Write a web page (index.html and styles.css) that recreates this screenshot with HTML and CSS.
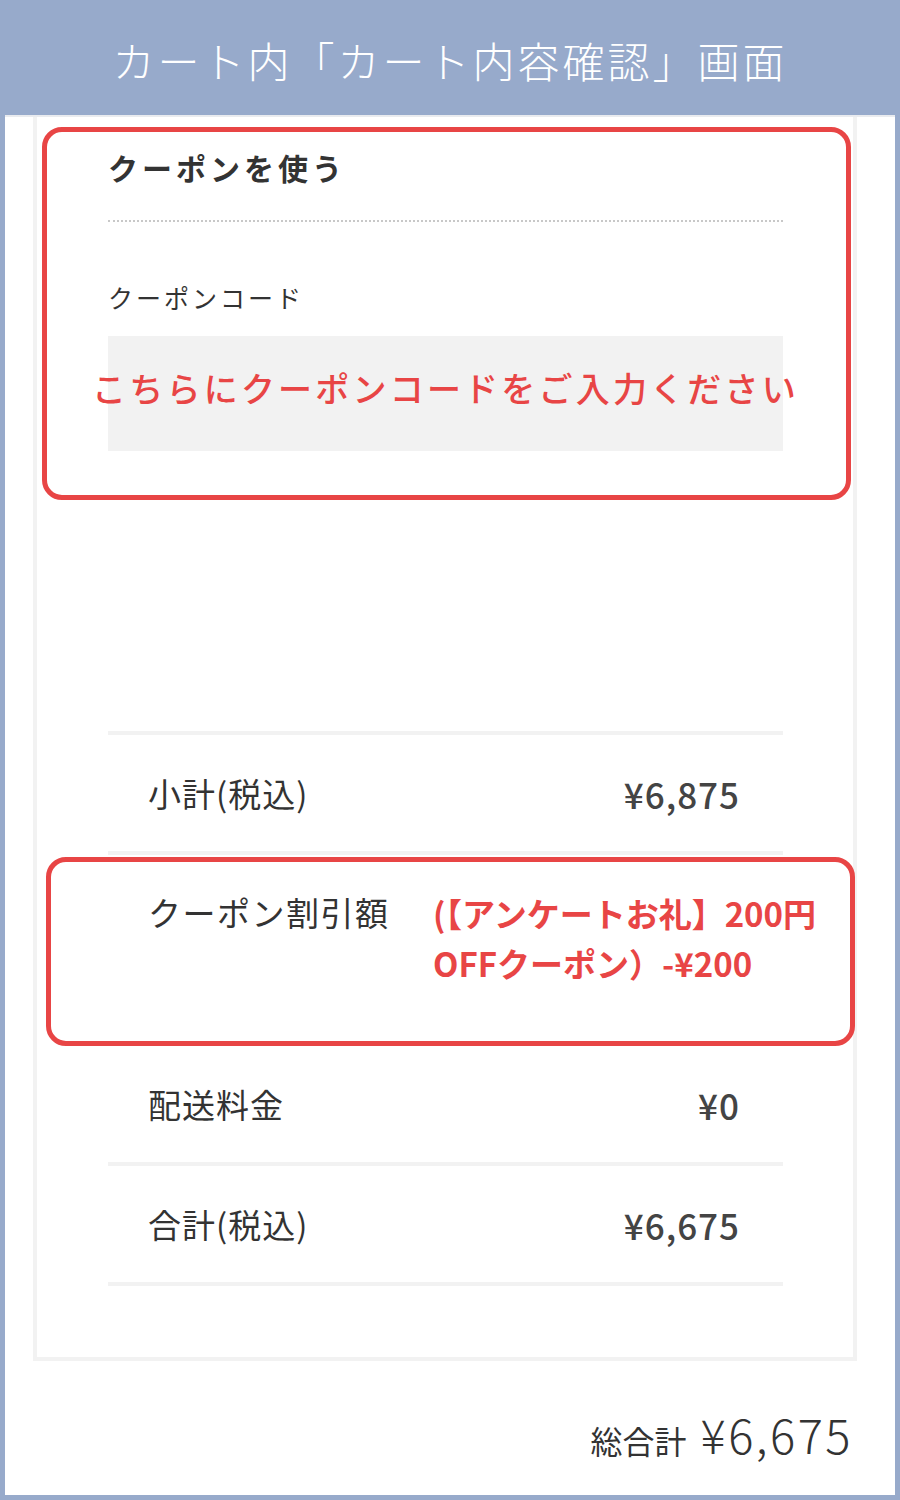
FILE: index.html
```html
<!DOCTYPE html>
<html lang="ja">
<head>
<meta charset="utf-8">
<title>カート内「カート内容確認」画面</title>
<link rel="stylesheet" href="styles.css">
</head>
<body>
<header class="header">カート内「カート内容確認」画面</header>
<main class="panel">
  <section class="card">
    <div class="mark coupon">
      <h2 class="coupon-title">クーポンを使う</h2>
      <div class="dotted"></div>
      <div class="coupon-label">クーポンコード</div>
      <div class="coupon-input"><span class="placeholder">こちらにクーポンコードをご入力ください</span></div>
    </div>
    <div class="summary">
      <div class="row"><span class="label">小計(税込)</span><span class="value">¥6,875</span></div>
      <div class="mark discount">
        <span class="label">クーポン割引額</span>
        <span class="discount-value">(【アンケートお礼】200円<br>OFFクーポン）-¥200</span>
      </div>
      <div class="row"><span class="label">配送料金</span><span class="value">¥0</span></div>
      <div class="row"><span class="label">合計(税込)</span><span class="value">¥6,675</span></div>
    </div>
  </section>
  <div class="grand">
    <span class="grand-label">総合計</span>
    <span class="grand-value">¥6,675</span>
  </div>
</main>
</body>
</html>
```
FILE: styles.css
```css
html, body {
  margin: 0;
  padding: 0;
}
body {
  background: #97aacb;
  font-family: "Noto Sans CJK JP", "Noto Sans", sans-serif;
  color: #333;
  height: 1500px;
  display: flex;
  flex-direction: column;
}
.header {
  height: 115px;
  box-sizing: border-box;
  padding-top: 4px;
  display: flex;
  align-items: center;
  justify-content: center;
  color: #fff;
  font-size: 42px;
  font-weight: 300;
  letter-spacing: 3px;
}
.panel {
  flex: 1;
  margin: 0 5px 5px 5px;
  background: #fff;
  border-top: 2px solid #e9ebef;
  display: flex;
  flex-direction: column;
}
.card {
  margin: 0 38px 0 28px;
  border: 4px solid #f2f2f2;
  border-top: none;
  padding-bottom: 71px;
}
.mark {
  border: 5px solid #e84545;
  border-radius: 20px;
}
.coupon {
  margin: 10px 2px 0 5px;
  padding: 15px 63px 44px 61px;
}
.coupon-title {
  margin: 0;
  font-size: 30px;
  line-height: 40px;
  font-weight: 700;
  letter-spacing: 4px;
  color: #333;
}
.dotted {
  margin-top: 33px;
  border-top: 2px dotted #c8c8c8;
}
.coupon-label {
  margin-top: 57px;
  font-size: 25px;
  line-height: 36px;
  letter-spacing: 3px;
  color: #333;
}
.coupon-input {
  margin-top: 21px;
  height: 115px;
  box-sizing: border-box;
  padding-bottom: 12px;
  background: #f2f2f2;
  display: flex;
  align-items: center;
  justify-content: center;
  white-space: nowrap;
}
.placeholder {
  color: #e84545;
  font-size: 34px;
  font-weight: 500;
  letter-spacing: 3.2px;
}
.summary {
  margin: 231px 70px 0 71px;
  border-top: 4px solid #f2f2f2;
}
.row {
  height: 116px;
  display: flex;
  align-items: center;
  justify-content: space-between;
  padding: 0 43px 0 40px;
  border-bottom: 4px solid #f2f2f2;
}
.label {
  font-size: 33px;
  letter-spacing: 1px;
  color: #333;
}
.value {
  font-size: 35px;
  font-weight: 500;
  letter-spacing: 1px;
  color: #444;
}
.discount {
  margin: 2px -72px 0 -62px;
  height: 189px;
  box-sizing: border-box;
  padding: 26px 0 0 97px;
  display: flex;
  align-items: flex-start;
}
.discount .label {
  width: 285px;
  flex: none;
  letter-spacing: 1.5px;
}
.discount-value {
  color: #e84545;
  font-size: 33px;
  font-weight: 700;
  line-height: 50px;
}
.grand {
  display: flex;
  justify-content: flex-end;
  align-items: baseline;
  padding: 38px 42px 0 0;
  gap: 14px;
}
.grand-label {
  font-size: 32px;
  color: #333;
}
.grand-value {
  font-size: 47px;
  font-weight: 300;
  letter-spacing: 2.5px;
  color: #333;
}
```
